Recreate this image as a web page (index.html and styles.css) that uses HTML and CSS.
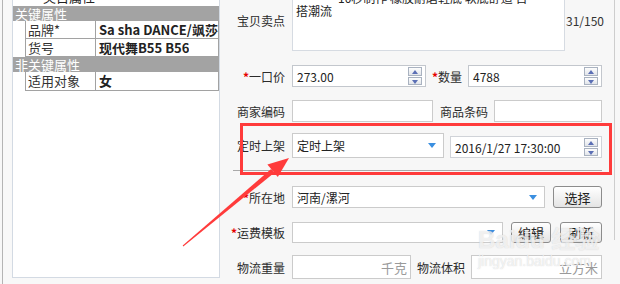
FILE: index.html
```html
<!DOCTYPE html>
<html lang="zh-CN">
<head>
  <meta charset="UTF-8">
  <title>宝贝属性</title>
  <link rel="stylesheet" href="styles.css">
</head>
<body>
  <div class="page">
    <aside class="side">
      <div class="panel">
        <div class="attr-cap"><span>类目属性</span></div>
        <div class="attr-head">关键属性</div>
        <div class="attr-row"><span class="k">品牌*</span><span class="v">Sa sha DANCE/飒莎</span></div>
        <div class="attr-row"><span class="k">货号</span><span class="v">现代舞B55 B56</span></div>
        <div class="attr-head">非关键属性</div>
        <div class="attr-row"><span class="k">适用对象</span><span class="v">女</span></div>
      </div>
    </aside>

    <main class="form">
      <div class="row row-desc">
        <label class="lbl">宝贝卖点</label>
        <div class="field area">
          <div class="area-first">10秒制作 橡胶耐磨鞋底 软底舒适 百</div>
          <div>搭潮流</div>
        </div>
        <span class="count">31/150</span>
      </div>

      <div class="row row-price">
        <label class="lbl"><i>*</i>一口价</label>
        <div class="field w-price">273.00<span class="spin"><b class="up"></b><b class="down"></b></span></div>
        <label class="lbl lbl-qty"><i>*</i>数量</label>
        <div class="field w-price">4788<span class="spin"><b class="up"></b><b class="down"></b></span></div>
      </div>

      <div class="row row-code">
        <label class="lbl">商家编码</label>
        <div class="field w-code"></div>
        <label class="lbl lbl-bar">商品条码</label>
        <div class="field w-bar"></div>
      </div>

      <div class="row row-timer">
        <label class="lbl">定时上架</label>
        <div class="field w-timer tall">定时上架<span class="caret"></span></div>
        <div class="field w-timer date">2016/1/27 17:30:00<span class="spin"><b class="up"></b><b class="down"></b></span></div>
      </div>

      <div class="rule"></div>

      <div class="row row-loc">
        <label class="lbl"><i>*</i>所在地</label>
        <div class="field w-loc">河南/漯河<span class="caret"></span></div>
        <button class="btn w-pick">选择</button>
      </div>

      <div class="row row-ship">
        <label class="lbl"><i>*</i>运费模板</label>
        <div class="field w-ship"><span class="caret"></span></div>
        <button class="btn w-edit">编辑</button>
        <button class="btn w-refresh">刷新</button>
      </div>

      <div class="row row-weight">
        <label class="lbl">物流重量</label>
        <div class="field w-weight"><span class="unit">千克</span></div>
        <label class="lbl lbl-vol">物流体积</label>
        <div class="field w-vol"><span class="unit">立方米</span></div>
      </div>
    </main>
  </div>

  <div class="mark-box"></div>
  <svg class="arrow" width="620" height="284" viewBox="0 0 620 284">
    <polygon points="183.3,246.4 182.7,245.6 271.1,168.9 274.3,172.7" fill="#ff3b3b"/>
    <polygon points="289,158 277.8,177 267.4,164.6" fill="#ff3b3b"/>
  </svg>
  <div class="watermark">
    <div class="wm-logo">Baidu 经验</div>
    <div class="wm-url">jingyan.baidu.com</div>
  </div>
</body>
</html>
```

FILE: styles.css
```css
:root {
  --label-color: #333;
  --field-border: #cbcbcb;
  --table-border: #a2a2a2;
  --mark-red: #ff3b3b;
}

body {
  margin: 0;
  width: 620px;
  height: 284px;
  overflow: hidden;
  background-color: #f7f7f7;
  font-family: "Noto Sans CJK SC", "Noto Sans", sans-serif;
  font-size: 13px;
  color: var(--label-color);
  position: relative;
}

.page {
  display: flex;
  align-items: flex-start;
}

/* left attribute list */
.side {
  box-sizing: border-box;
  width: 218px;
  margin-left: 2px;
  padding-left: 9px;
  border-left: 1px solid #b4b4b4;
  height: 284px;
  background-color: #f8f8f8;
}

.panel {
  box-sizing: border-box;
  height: 278px;
  background-color: white;
  border-left: 1px solid #d3dae3;
  border-right: 1px solid #d3dae3;
  border-bottom: 1px solid #d3dae3;
}

.attr-cap {
  height: 6px;
  overflow: hidden;
  padding-left: 30px;
}

.attr-cap span {
  display: block;
  margin-top: -11px;
  line-height: 16px;
  color: #222;
}

.attr-head {
  height: 15px;
  line-height: 15px;
  padding-left: 2px;
  background-color: #a3a3a3;
  color: white;
}

.attr-row {
  display: flex;
  box-sizing: border-box;
  height: 18px;
  line-height: 17px;
  margin-left: 12px;
  border-left: 1px solid var(--table-border);
  border-right: 1px solid var(--table-border);
  border-bottom: 1px solid var(--table-border);
}

.attr-row:last-child {
  height: 19px;
}

.attr-row .k {
  box-sizing: border-box;
  width: 70px;
  padding-left: 2px;
  border-right: 1px solid var(--table-border);
  color: #333;
}

.attr-row .v {
  padding-left: 3px;
  font-weight: 700;
  color: #222;
  white-space: nowrap;
  overflow: hidden;
}

/* right form */
.form {
  box-sizing: border-box;
  width: 395px;
  height: 240px;
  border-right: 1px solid #cdcdcd;
}

.row {
  display: flex;
  align-items: center;
}

.lbl {
  box-sizing: border-box;
  width: 72px;
  padding-right: 7px;
  text-align: right;
  white-space: nowrap;
  font-size: 12px;
  color: #2b2b2b;
}

.lbl i {
  font-style: normal;
  color: #e60000;
  font-weight: 700;
}

.field {
  box-sizing: border-box;
  display: flex;
  align-items: center;
  height: 22px;
  padding: 0 3px 0 4px;
  background-color: white;
  border: 1px solid var(--field-border);
  font-size: 12px;
  color: #222;
  white-space: nowrap;
}

.row-desc {
  align-items: flex-start;
  height: 61px;
  margin-top: -10px;
}

.row-desc .lbl {
  padding-top: 22px;
}

.area {
  display: block;
  width: 273px;
  height: 61px;
  padding: 0 3px;
  border-color: #d6dbe2;
  line-height: 13px;
}

.area-first {
  padding-left: 42px;
}

.count {
  padding-top: 22px;
  padding-left: 1px;
  font-size: 12px;
  color: #333;
}

.row-price {
  margin-top: 14px;
}

.w-price {
  width: 134px;
  border-color: #c3c7cd;
}

.lbl-qty {
  width: 42px;
  padding-right: 6px;
}

.spin {
  display: flex;
  flex-direction: column;
  gap: 1px;
  margin-left: auto;
  width: 14px;
  height: 18px;
}

.spin b {
  flex: 1;
  position: relative;
  border: 1px solid #a9b2c0;
  background: linear-gradient(#fdfdfd, #e2e5ea);
}

.spin b::after {
  content: "";
  position: absolute;
  left: 3px;
  top: 2px;
  border-left: 3px solid transparent;
  border-right: 3px solid transparent;
}

.spin .up::after {
  border-bottom: 4px solid #5b6fb5;
}

.spin .down::after {
  border-top: 4px solid #5b6fb5;
}

.row-code {
  margin-top: 13px;
}

.w-code {
  width: 141px;
}

.lbl-bar {
  width: 61px;
  padding-right: 6px;
}

.w-bar {
  width: 108px;
}

.row-timer {
  margin-top: 11px;
  align-items: flex-end;
  gap: 6px;
}

.row-timer .lbl {
  margin-right: -6px;
  padding-bottom: 4px;
}

.w-timer {
  width: 152px;
}

.tall {
  height: 25px;
}

.date {
  height: 22px;
  border-color: #d0d3d8;
}

.caret {
  margin-left: auto;
  margin-right: 4px;
  border-left: 4px solid transparent;
  border-right: 4px solid transparent;
  border-top: 5px solid #3b8fe0;
}

.rule {
  height: 1px;
  margin: 12px 0 0 13px;
  width: 369px;
  background-color: #a9a9a9;
}

.row-loc {
  margin-top: 15px;
  gap: 8px;
}

.row-loc .lbl {
  margin-right: -8px;
}

.w-loc {
  width: 253px;
}

.btn {
  box-sizing: border-box;
  height: 22px;
  padding: 0;
  border: 1px solid #8c8c8c;
  border-radius: 3px;
  background: linear-gradient(#ffffff, #e4e4e4);
  font-family: inherit;
  font-size: 13px;
  color: #222;
}

.w-pick {
  width: 49px;
}

.row-ship {
  margin-top: 14px;
  gap: 8px;
}

.row-ship .lbl {
  margin-right: -8px;
}

.w-ship {
  width: 211px;
  height: 21px;
}

.w-edit {
  width: 40px;
  height: 21px;
}

.w-refresh {
  width: 42px;
  height: 21px;
  margin-left: 1px;
}

.row-weight {
  margin-top: 12px;
}

.w-weight {
  width: 119px;
  height: 24px;
}

.lbl-vol {
  width: 60px;
  padding-right: 6px;
}

.w-vol {
  width: 131px;
  height: 24px;
}

.unit {
  margin-left: auto;
  font-size: 13px;
  color: #9a9a9a;
}

/* annotation overlays */
.mark-box {
  position: absolute;
  left: 240px;
  top: 123px;
  width: 366px;
  height: 46px;
  border: 3px solid var(--mark-red);
}

.arrow {
  position: absolute;
  left: 0;
  top: 0;
}

.watermark {
  position: absolute;
  left: 478px;
  top: 226px;
  color: rgba(255, 255, 255, 0.7);
  text-shadow: 0 0 1px rgba(160, 160, 160, 0.5);
  font-family: "Liberation Sans", "Noto Sans CJK SC", sans-serif;
  pointer-events: none;
}

.wm-logo {
  font-size: 24px;
  font-weight: 700;
  line-height: 28px;
}

.wm-url {
  font-size: 14px;
  line-height: 14px;
}
```
